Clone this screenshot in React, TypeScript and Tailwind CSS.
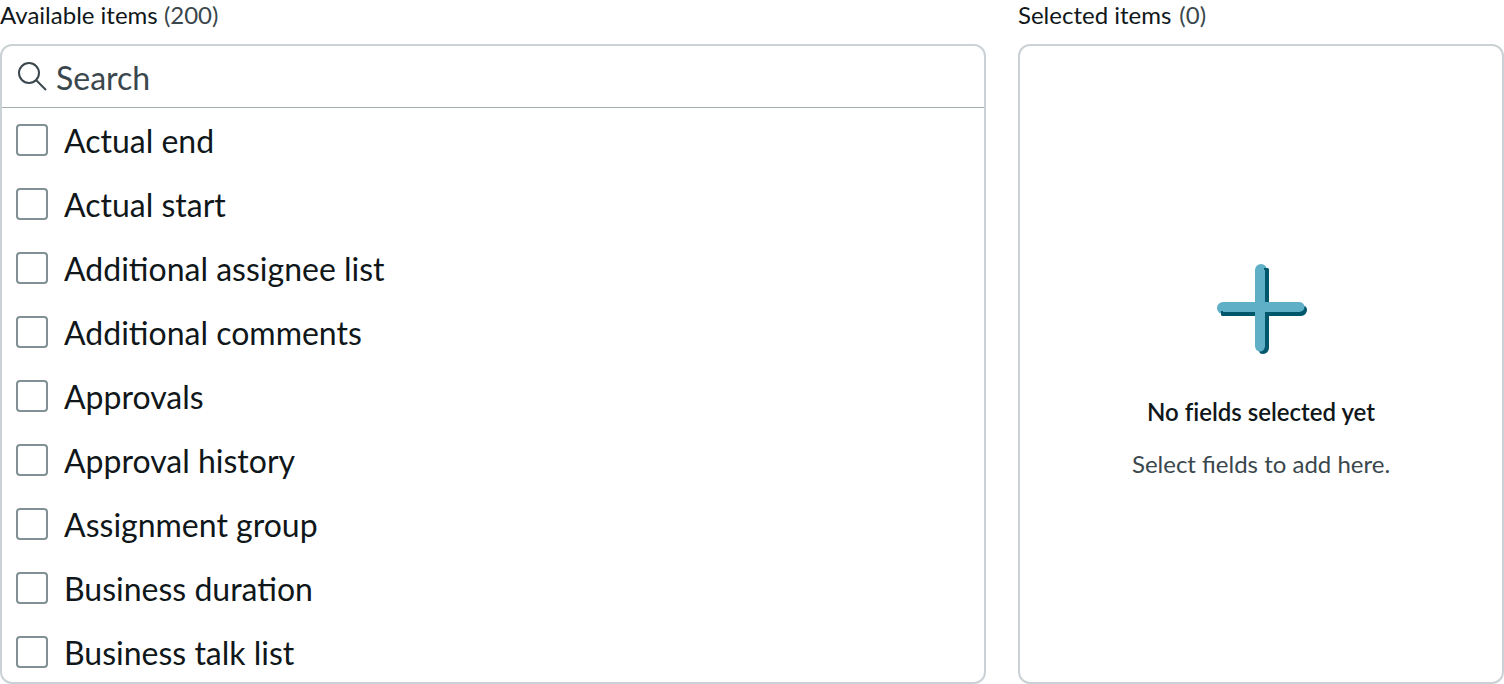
const items = [
  'Actual end',
  'Actual start',
  'Additional assignee list',
  'Additional comments',
  'Approvals',
  'Approval history',
  'Assignment group',
  'Business duration',
  'Business talk list',
];

function SearchIcon() {
  return (
    <svg className="size-8 shrink-0" viewBox="0 1 32 32" fill="none" stroke="#3a474d" strokeWidth="2" aria-hidden="true">
      <circle cx="13" cy="13" r="10" />
      <path d="M20 20l10 10" />
    </svg>
  );
}

function PlusArt() {
  return (
    <svg className="size-[92px]" viewBox="-2 -2 92 92" overflow="visible" aria-hidden="true">
      <g fill="#5fafc7">
        <circle cx="44" cy="6" r="6" />
        <circle cx="6" cy="44" r="6" />
      </g>
      <g fill="#00566b">
        <path d="M47 4h3.500a1.500 1.500 0 0 1 1.500 1.500V84a6 6 0 0 1-6 6c-2 0-3.500-.8-4-2.500L47 82z" />
        <path d="M4 47v3.500a1.500 1.500 0 0 0 1.500 1.500H84a6 6 0 0 0 6-6c0-2-.8-3.500-2.500-4L82 47z" />
      </g>
      <g fill="#5fafc7">
        <path d="M38 6V82a5 5.500 0 0 0 10 0V6z" />
        <path d="M6 38H82a5.500 5 0 0 1 0 10H6z" />
      </g>
    </svg>
  );
}

export default function App() {
  return (
    <main className="flex h-screen gap-8 overflow-hidden bg-white font-['Lato',sans-serif] text-[#10171a]">
      <section className="flex min-w-0 flex-[986] flex-col gap-3.5">
        <h2 className="text-2xl leading-[30px]">
          Available items <span className="text-[#3a474d]">(200)</span>
        </h2>
        <div className="flex min-h-0 flex-1 flex-col overflow-hidden rounded-xl border-2 border-[#cbd2d5]">
          <label className="flex h-[62px] shrink-0 items-center gap-2 border-b border-[#a5aeb1] px-3.5">
            <SearchIcon />
            <input
              type="text"
              aria-label="Search"
              placeholder="Search"
              className="min-w-0 flex-1 pt-0.5 text-[32px] leading-10 outline-none placeholder:text-[#3a474d]"
            />
          </label>
          <ul>
            {items.map((item) => (
              <li key={item}>
                <label className="flex h-16 items-center gap-4 px-3.5 text-[32px] leading-10">
                  <input
                    type="checkbox"
                    className="size-8 shrink-0 appearance-none rounded border-2 border-[#829095] bg-white checked:bg-[#00566b]"
                  />
                  <span className="pt-0.5">{item}</span>
                </label>
              </li>
            ))}
          </ul>
        </div>
      </section>
      <section className="flex min-w-0 flex-[486] flex-col gap-3.5">
        <h2 className="flex gap-2 text-2xl leading-[30px]">
          Selected items <span className="text-[#3a474d]">(0)</span>
        </h2>
        <div className="flex min-h-0 flex-1 flex-col items-center justify-center rounded-xl border-2 border-[#cbd2d5] pt-4 text-center text-2xl leading-9">
          <PlusArt />
          <p className="mt-10 font-semibold [font-variant-ligatures:none]">No fields selected yet</p>
          <p className="mt-4 text-[#3a474d]">Select fields to add here.</p>
        </div>
      </section>
    </main>
  );
}
